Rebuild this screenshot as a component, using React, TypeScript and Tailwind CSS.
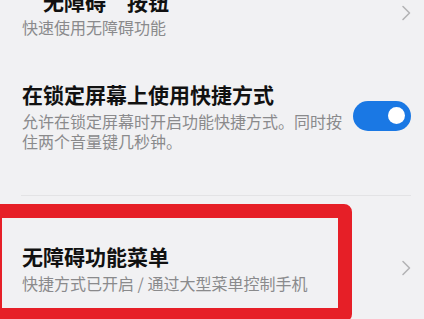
import { ChevronRight } from 'lucide-react';

function Chevron() {
  return (
    <svg width="10" height="16" viewBox="0 0 10 16" fill="none" className="shrink-0">
      <path d="M2 1.5 L8.5 8 L2 14.5" stroke="#b4b4b6" strokeWidth="1.6" strokeLinecap="round" strokeLinejoin="round" />
    </svg>
  );
}

function Toggle() {
  return (
    <div className="w-[58px] h-[30px] rounded-full bg-[#1a78e4] flex items-center justify-end pr-[6px] shrink-0">
      <div className="w-[17px] h-[17px] rounded-full bg-white" />
    </div>
  );
}

export default function App() {
  void ChevronRight;
  return (
    <div className="relative w-[424px] h-[319px] overflow-hidden bg-[#f1f1f3] font-['Noto_Sans_CJK_SC','Noto_Sans',sans-serif]">
      <div className="pl-[22px] pr-[13px]">
        <div className="flex items-center justify-between -mt-[12px]">
          <div>
            <div className="text-[21px] leading-[26px] font-bold text-[#111]">“无障碍”按钮</div>
            <div className="mt-[2px] text-[16px] leading-[22px] text-[#8a8a8c]">快速使用无障碍功能</div>
          </div>
          <Chevron />
        </div>

        <div className="flex items-center justify-between mt-[42px]">
          <div className="w-[326px]">
            <div className="text-[21px] leading-[28px] font-bold text-[#111]">在锁定屏幕上使用快捷方式</div>
            <div className="mt-[3px] text-[16px] leading-[20px] text-[#8a8a8c]">
              允许在锁定屏幕时开启功能快捷方式。同时按住两个音量键几秒钟。
            </div>
          </div>
          <Toggle />
        </div>

        <div className="mt-[44px] -ml-px h-px bg-[#e3e3e5]" />

        <div className="flex items-center justify-between mt-[46px]">
          <div>
            <div className="text-[21px] leading-[28px] font-bold text-[#111]">无障碍功能菜单</div>
            <div className="mt-[2px] text-[16px] leading-[22px] text-[#8a8a8c]">快捷方式已开启 / 通过大型菜单控制手机</div>
          </div>
          <Chevron />
        </div>
      </div>

      <div className="absolute left-[-12px] top-[204px] w-[364px] h-[118px] border-[14px] border-[#e61f27] rounded-[8px]" />
    </div>
  );
}
